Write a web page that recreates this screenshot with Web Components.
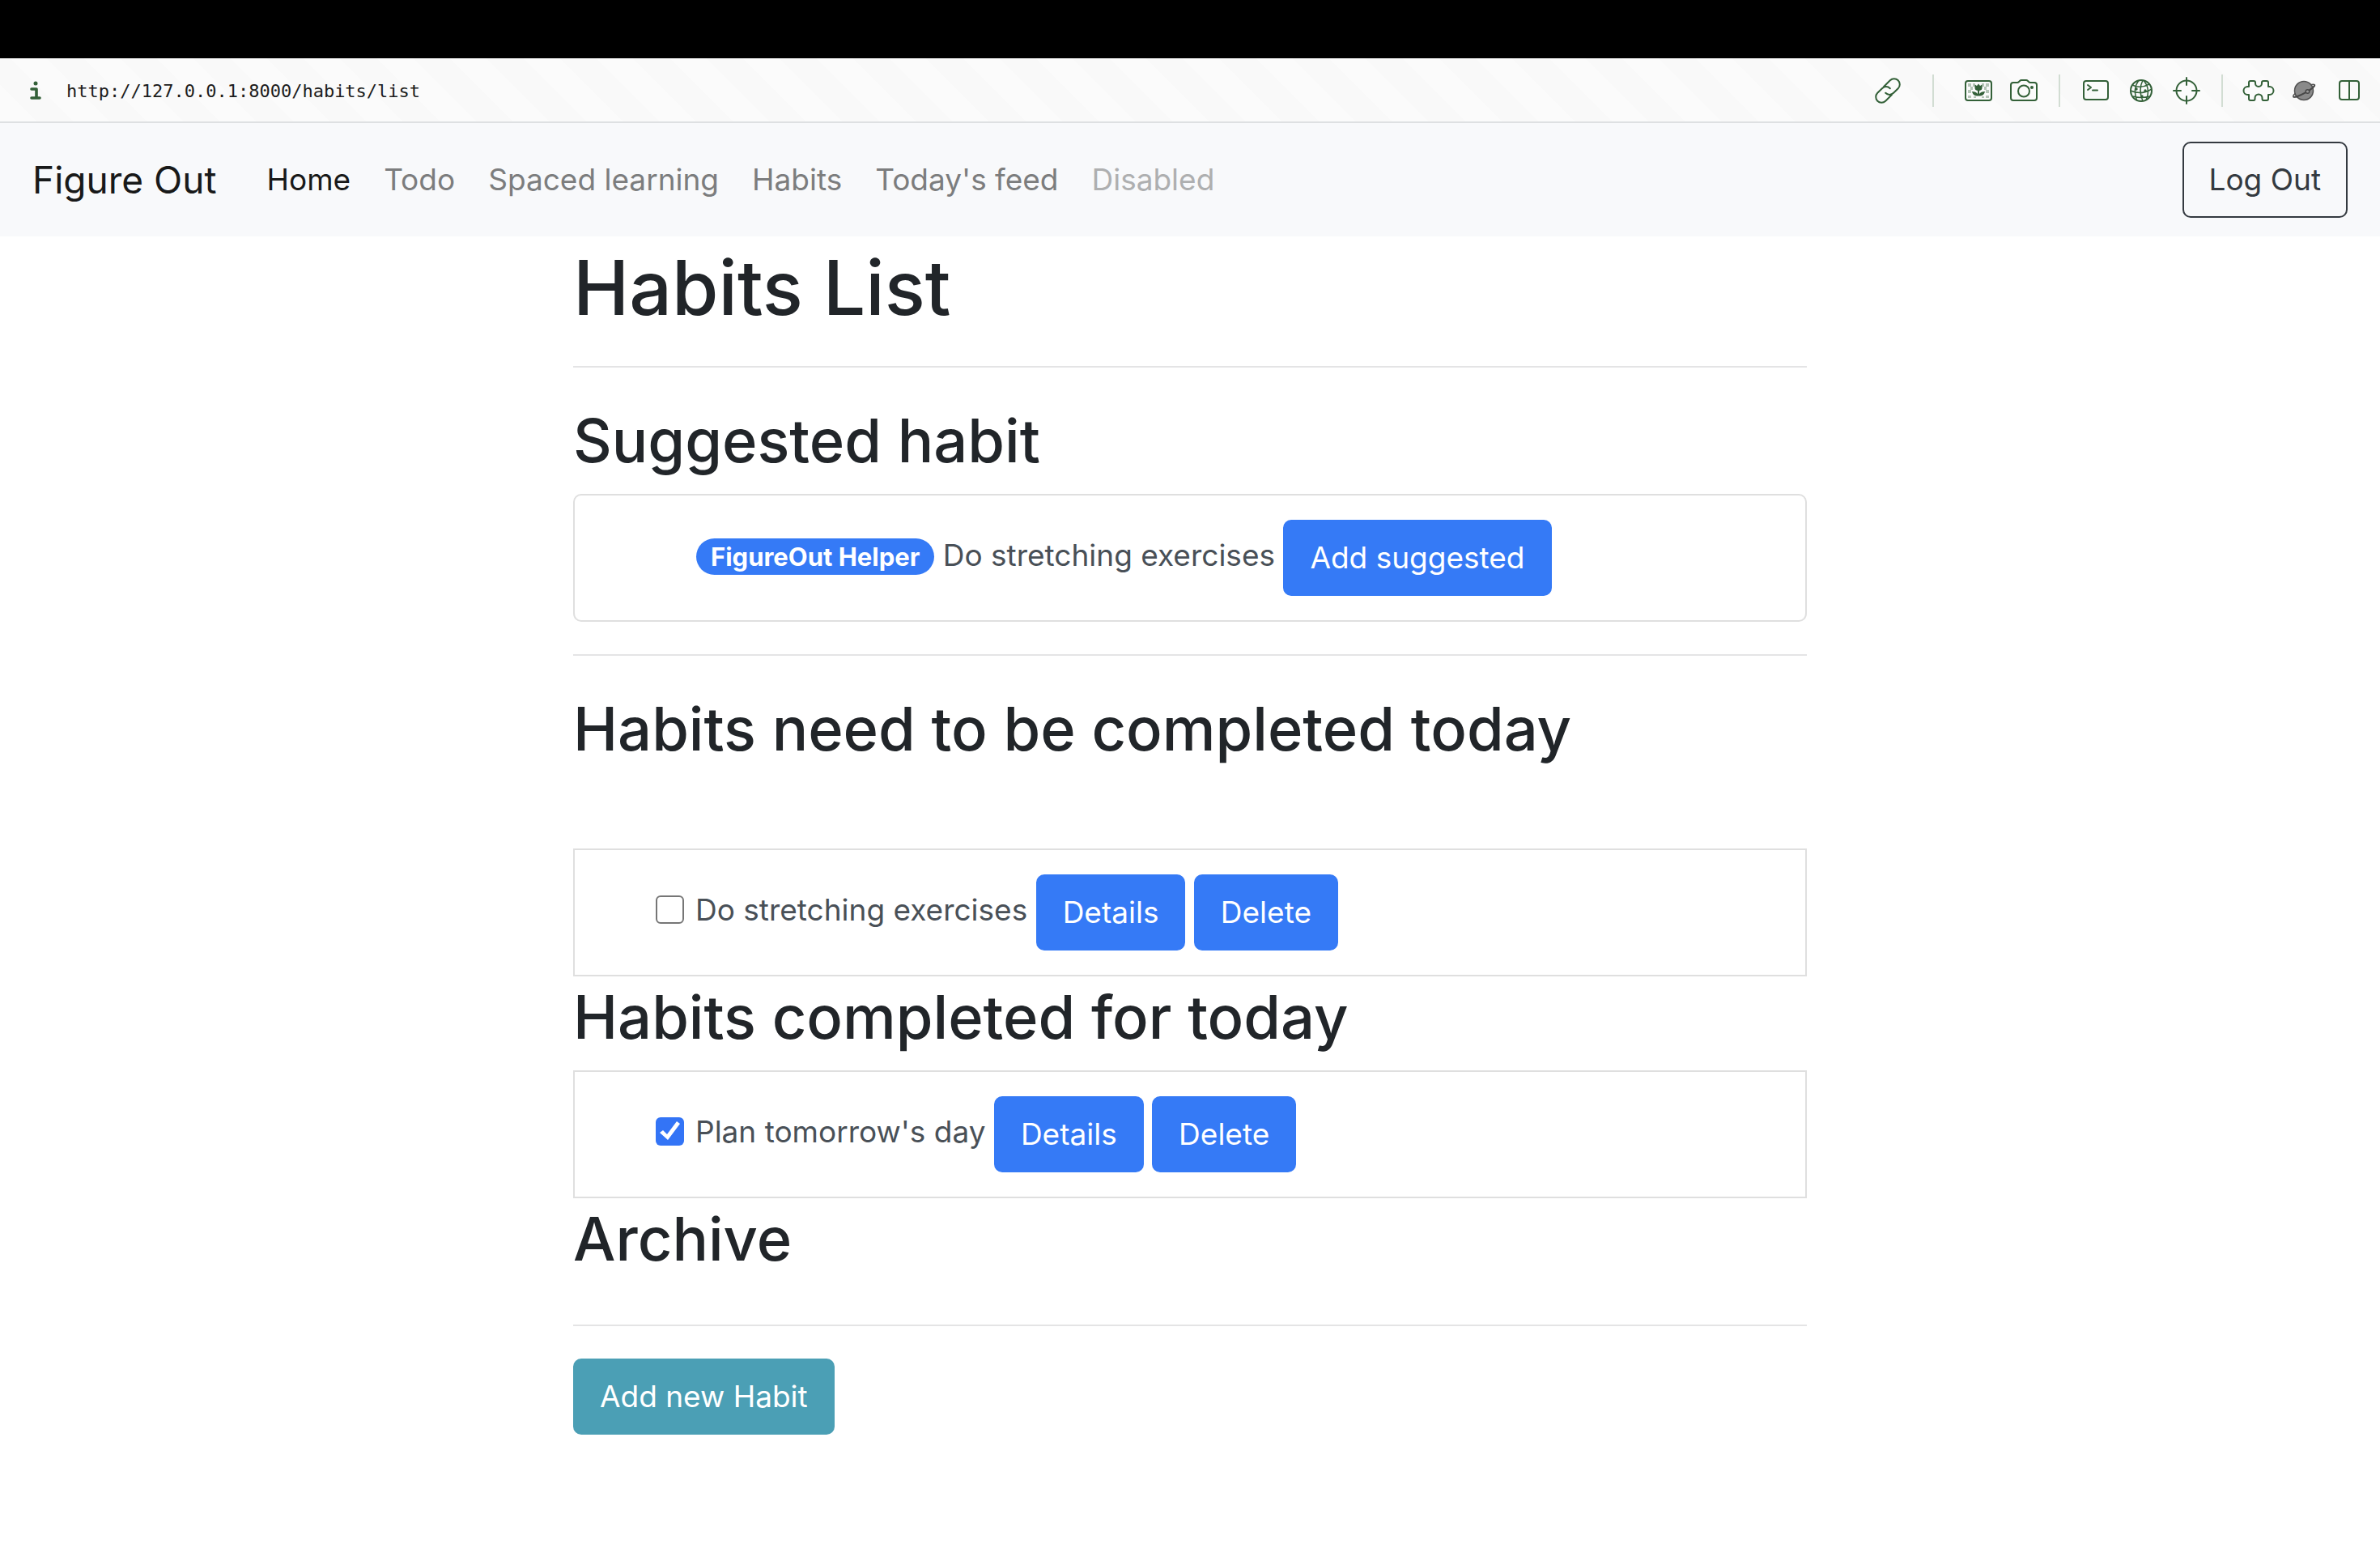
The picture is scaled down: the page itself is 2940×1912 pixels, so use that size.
<!DOCTYPE html>
<html lang="en">
<head>
<meta charset="utf-8">
<title>Habits List</title>
<style>
  body { margin: 0; background: #fff; color: #212529; font: 400 37px/60px Inter, "Liberation Sans", sans-serif; }
</style>
</head>
<body>
<browser-bar></browser-bar>
<app-nav></app-nav>
<habits-page></habits-page>

<script>
const define = (name, html, setup) => customElements.define(name, class extends HTMLElement {
  connectedCallback() {
    if (this.shadowRoot) return;
    const t = document.createElement('template');
    t.innerHTML = html;
    this.attachShadow({ mode: 'open' }).append(t.content.cloneNode(true));
    if (setup) setup(this, this.shadowRoot);
  }
});

const G = 'fill="none" stroke="#336038" stroke-width="2" stroke-linecap="round" stroke-linejoin="round"';
const ICONS = {
  link: `<g ${G}><g transform="rotate(-45 20 20)"><path d="M20 27H9a7 7 0 0 1 0-14H17a7 7 0 0 1 7 7M20 13H31a7 7 0 0 1 0 14H23a7 7 0 0 1-7-7"/></g></g>`,
  image: `<g fill="#336038" fill-opacity=".35"><path d="M7 11h4v4H7zM13 11h3v4h-3zM29 11h4v4h-4zM24 11h3v4h-3zM10 15h3v4h-3zM27 15h3v4h-3zM7 19h4v4H7zM29 19h4v4h-4zM7 26h4v3H7zM29 26h4v3h-4zM14 27h3v2h-3zM24 27h3v2h-3z"/></g><path fill="#336038" d="M15.500 12.500l2.500 1.500 2-2.500 2 2.500 2.500-1.500v4q0 3-3.500 3.500v4q2-3 7-3-1 5-6 5.500h-4q-5-.5-6-5.500 5 0 7 3v-4q-3.500-.5-3.500-3.500z"/><rect x="4" y="8" width="32" height="24" rx="3" ${G}/>`,
  camera: `<g ${G}><path d="M7 10h5q1 0 2-1l1-1q1-1 2-1h6q1 0 2 1l1 1q1 1 2 1h5q3 0 3 3v16q0 3-3 3H7q-3 0-3-3V13q0-3 3-3z"/><circle cx="20" cy="20.500" r="7"/></g><circle cx="30" cy="16" r="2" fill="#336038"/>`,
  terminal: `<g ${G}><rect x="5" y="8" width="30" height="23" rx="3"/><path d="M10 13l4 3-4 3M16 19.500h6"/></g>`,
  globe: `<g fill="none" stroke="#336038" stroke-width="1.500"><circle cx="20" cy="20" r="13" stroke-width="2"/><path d="M17 7.500q-8 10-2 25M22 7q-6 12 0 26M23 7.500q9 10 3 24M9 13q10 5 21-1M7 20q13 6 26-2M10 27q9 3 21 0"/></g><g fill="#336038"><circle cx="14" cy="18" r="1.700"/><circle cx="25" cy="20" r="1.700"/><circle cx="21" cy="27" r="1.700"/></g>`,
  target: `<g ${G}><circle cx="20" cy="20" r="12.500"/><path d="M20 4v9M20 27v9M4 20h9M27 20h9"/></g>`,
  puzzle: `<path ${G} d="M10 8h4q2 0 2 2v1a4 4 0 0 0 8 0v-1q0-2 2-2h4q2 0 2 2v5h1.500a5 5 0 0 1 0 10H32v5q0 2-2 2h-4q-1.500 0-1.500-2v-1a4.500 4.500 0 0 0-9 0v1q0 2-1.500 2h-4q-2 0-2-2v-5H6.500a5 5 0 0 1 0-10H8v-5q0-2 2-2z"/>`,
  planet: `<ellipse cx="20" cy="20" rx="15" ry="3" transform="rotate(-29 20 20)" fill="none" stroke="#505050" stroke-width="1.500"/><circle cx="20" cy="20" r="11.500" fill="#8a8a8a" stroke="#505050" stroke-width="1.500"/><g transform="rotate(-29 20 20)"><path d="M5 20a15 3 0 0 0 30 0" fill="none" stroke="#484848" stroke-width="2"/></g><circle cx="24.500" cy="21" r="2.300" fill="#999" stroke="#484848" stroke-width="1.500"/>`,
  split: `<g ${G}><rect x="8" y="8" width="24" height="23" rx="3"/><path d="M20 8v23"/></g>`
};

define('tool-icon', `
  <style>
    :host { display: block; flex: none; width: 56px; height: 56px; }
    button { display: grid; place-items: center; width: 100%; height: 100%; padding: 0; border: 0; background: none; }
    svg { width: 40px; height: 40px; overflow: visible; }
  </style>
  <button type="button"></button>`, (el, root) => {
    const b = root.querySelector('button');
    b.setAttribute('aria-label', el.getAttribute('label'));
    b.innerHTML = `<svg viewBox="0 0 40 40" aria-hidden="true">${ICONS[el.getAttribute('name')]}</svg>`;
  });

define('browser-bar', `
  <style>
    :host { display: block; border-top: 72px solid #000; }
    .bar { display: flex; align-items: center; box-sizing: border-box; height: 80px; padding: 2px 10px 0 36px; border-bottom: 2px solid #dee0e2;
      background: repeating-linear-gradient(45deg, #fbfbfb 0 32px, #f9f9f9 32px 64px); }
    .info { flex: none; width: 16px; height: 26px; margin-right: 30px; }
    input { flex: 1; min-width: 0; padding: 2px 0 0; border: 0; outline: 0; background: none; color: #1c1c1c; font: 22px/32px "DejaVu Sans Mono", monospace; }
    .tools { display: flex; align-items: center; }
    i { width: 2px; height: 40px; margin: 0 16px 0 15px; background: #d2ddd3; }
    i.wide { margin: 0 27px; }
  </style>
  <div class="bar">
    <svg class="info" viewBox="0 0 16 26" aria-hidden="true"><circle cx="8" cy="4" r="2.500" fill="#336038"/><path d="M3 11h6v11M3 22h10" fill="none" stroke="#336038" stroke-width="3.600" stroke-linecap="round" stroke-linejoin="round"/></svg>
    <input type="text" aria-label="Address" value="http://127.0.0.1:8000/habits/list" spellcheck="false">
    <div class="tools">
      <tool-icon name="link" label="Copy link"></tool-icon><i class="wide"></i>
      <tool-icon name="image" label="Images"></tool-icon><tool-icon name="camera" label="Capture page"></tool-icon><i></i>
      <tool-icon name="terminal" label="Console"></tool-icon><tool-icon name="globe" label="Network"></tool-icon><tool-icon name="target" label="Inspect"></tool-icon><i></i>
      <tool-icon name="puzzle" label="Extensions"></tool-icon><tool-icon name="planet" label="Planet"></tool-icon><tool-icon name="split" label="Split view"></tool-icon>
    </div>
  </div>`);

define('ui-button', `
  <style>
    :host { display: inline-block; vertical-align: middle; }
    button { display: block; height: 94px; padding: 0 31px; border: 2px solid #357af6; border-radius: 10px; background: #357af6; color: #fff; font: inherit; line-height: 60px; }
    :host([kind="info"]) button { background: #4b9fb5; border-color: #4b9fb5; }
    :host([kind="outline"]) button { background: none; border-color: #343a40; color: #343a40; }
  </style>
  <button type="button"><slot></slot></button>`);

define('nav-link', `
  <style>
    :host { display: block; }
    a { color: #7c7d7e; text-decoration: none; }
    :host([active]) a { color: #181919; }
    :host([disabled]) a { color: #aeafb0; pointer-events: none; }
  </style>
  <a href="#"><slot></slot></a>`);

define('app-nav', `
  <style>
    :host { display: block; background: #f8f9fb; }
    nav { display: flex; align-items: center; padding: 23px 40px; }
    .brand { margin-right: 62px; color: #181919; font-size: 46px; line-height: 72px; text-decoration: none; }
    .links { display: flex; gap: 41px; flex: 1; }
  </style>
  <nav>
    <a class="brand" href="#">Figure Out</a>
    <div class="links">
      <nav-link active>Home</nav-link><nav-link>Todo</nav-link><nav-link>Spaced learning</nav-link><nav-link>Habits</nav-link><nav-link>Today's feed</nav-link><nav-link disabled>Disabled</nav-link>
    </div>
    <ui-button kind="outline">Log Out</ui-button>
  </nav>`);

define('habit-card', `
  <style>
    :host { display: block; padding: 30px 30px 30px 100px; border: 2px solid #dfdfdf; color: #495057; }
    :host([suggested]) { padding-left: 150px; border-radius: 10px; }
    .row { height: 94px; }
  </style>
  <div class="row"><slot></slot></div>`);

define('habit-check', `
  <style>
    :host { display: inline; }
    input { appearance: none; box-sizing: border-box; width: 35px; height: 35px; margin: 0 14px 0 0; border: 2px solid #767676; border-radius: 6px; background: #fff; vertical-align: -4px; }
    input:checked { border: 0; background: #3374f6; }
    input:checked::before { content: ""; display: block; width: 35px; height: 35px; background: #fff; clip-path: polygon(5px 19px, 9px 16px, 14px 21px, 26px 5px, 30px 8px, 15px 28px); }
  </style>
  <input type="checkbox" id="done"><label for="done"><slot></slot></label>`,
  (el, root) => { root.querySelector('input').checked = el.hasAttribute('checked'); });

define('pill-badge', `
  <style>
    :host { display: inline-block; padding: 0 18px; border-radius: 23px; background: #357af6; color: #fff; font-size: 31px; font-weight: 700; line-height: 45px; }
  </style><slot></slot>`);

define('habits-page', `
  <style>
    :host { display: block; max-width: 1524px; margin: 0 auto; }
    h1, h2 { margin: 0 0 20px; font-weight: 500; }
    h1 { padding-top: 6px; font-size: 93px; line-height: 114px; }
    h2 { padding-top: 4px; font-size: 74px; line-height: 92px; }
    hr { height: 2px; margin: 40px 0; border: 0; background: #e4e4e5; }
    .pending { margin-bottom: 102px; }
    .archive { margin-bottom: 60px; }
  </style>
  <main>
    <h1>Habits List</h1>
    <hr>
    <h2>Suggested habit</h2>
    <habit-card suggested><pill-badge>FigureOut Helper</pill-badge> Do stretching exercises <ui-button>Add suggested</ui-button></habit-card>
    <hr>
    <h2 class="pending">Habits need to be completed today</h2>
    <habit-card><habit-check>Do stretching exercises</habit-check> <ui-button>Details</ui-button> <ui-button>Delete</ui-button></habit-card>
    <h2>Habits completed for today</h2>
    <habit-card><habit-check checked>Plan tomorrow's day</habit-check> <ui-button>Details</ui-button> <ui-button>Delete</ui-button></habit-card>
    <h2 class="archive">Archive</h2>
    <hr>
    <ui-button kind="info">Add new Habit</ui-button>
  </main>`);
</script>
</body>
</html>
